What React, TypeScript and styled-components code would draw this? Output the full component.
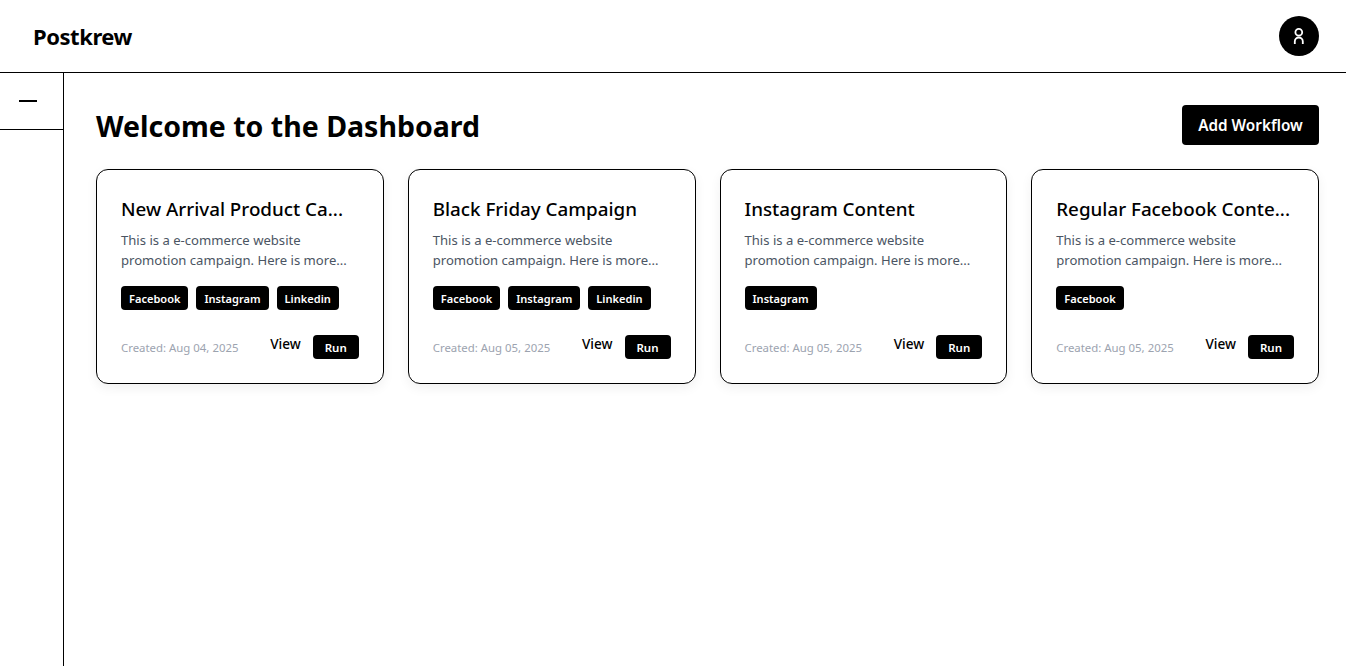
import React from 'react';
import styled, { createGlobalStyle } from 'styled-components';

const GlobalStyle = createGlobalStyle`
  * { box-sizing: border-box; }
  html, body { margin: 0; padding: 0; background: #fff; height: 100%; }
  body { font-family: "Noto Sans", "Open Sans", sans-serif; color: #000; }
`;

const Page = styled.div`
  height: 666px;
  display: flex;
  flex-direction: column;
  overflow: hidden;
`;

const Header = styled.header`
  height: 73px;
  flex: none;
  display: flex;
  align-items: center;
  justify-content: space-between;
  padding: 0 27px 1px 32px;
  border-bottom: 1px solid #000;
`;

const Logo = styled.div`
  font-size: 22px;
  font-weight: 700;
  letter-spacing: -0.45px;
  margin-left: 1px;
`;

const Avatar = styled.button`
  width: 40px;
  height: 40px;
  padding: 0;
  border: none;
  border-radius: 50%;
  background: #000;
  display: flex;
  align-items: center;
  justify-content: center;
`;

const Body = styled.div`
  flex: 1;
  display: flex;
  min-height: 0;
`;

const Sidebar = styled.aside`
  width: 64px;
  flex: none;
  border-right: 1px solid #000;
`;

const SideToggle = styled.div`
  height: 57px;
  display: flex;
  align-items: center;
  padding-left: 19px;
  border-bottom: 1px solid #000;
`;

const Dash = styled.span`
  display: block;
  width: 18px;
  height: 2px;
  background: #000;
`;

const Main = styled.main`
  flex: 1;
  min-width: 0;
  padding: 32px 27px 32px 32px;
`;

const TitleRow = styled.div`
  display: flex;
  align-items: center;
  justify-content: space-between;
  margin-bottom: 24px;
`;

const Title = styled.h1`
  margin: 0;
  padding-top: 2px;
  font-size: 28.5px;
  line-height: 38px;
  font-weight: 700;
`;

const AddButton = styled.button`
  height: 40px;
  width: 137px;
  padding: 0;
  border: none;
  border-radius: 4px;
  background: #000;
  color: #fff;
  font: 600 15.3px "Noto Sans", "Open Sans", sans-serif;
`;

const CardGrid = styled.div`
  display: grid;
  grid-template-columns: repeat(4, minmax(0, 1fr));
  gap: 24px;
`;

const Card = styled.article`
  height: 215px;
  padding: 24px;
  border: 1px solid #000;
  border-radius: 12px;
  background: #fff;
  box-shadow: 0 4px 12px rgba(0, 0, 0, 0.06);
  display: flex;
  flex-direction: column;
`;

const CardTitle = styled.h3`
  margin: 0 0 7px;
  padding-top: 1px;
  font-size: 18.8px;
  line-height: 28px;
  font-weight: 500;
  white-space: nowrap;
`;

const CardText = styled.p`
  margin: 0 0 16px;
  font-size: 13.1px;
  line-height: 20px;
  color: #4b5563;
`;

const Tags = styled.div`
  display: flex;
  gap: 8px;
  height: 24px;
`;

const Tag = styled.span`
  height: 24px;
  padding: 1px 8px 0;
  border-radius: 4px;
  background: #000;
  color: #fff;
  font-size: 11.05px;
  font-weight: 600;
  line-height: 23px;
`;

const CardFooter = styled.div`
  margin-top: auto;
  display: flex;
  align-items: center;
  justify-content: space-between;
`;

const Created = styled.span`
  font-size: 11.4px;
  color: #9ca3af;
`;

const Actions = styled.div`
  display: flex;
  align-items: center;
  gap: 12px;
`;

const ViewLink = styled.span`
  font-size: 13.6px;
  font-weight: 500;
  position: relative;
  top: -4px;
`;

const RunButton = styled.button`
  height: 24px;
  width: 46px;
  padding: 0;
  border: none;
  border-radius: 4px;
  background: #000;
  color: #fff;
  font: 600 11.5px "Noto Sans", "Open Sans", sans-serif;
`;

const workflows = [
  { title: 'New Arrival Product Ca...', date: 'Aug 04, 2025', tags: ['Facebook', 'Instagram', 'Linkedin'] },
  { title: 'Black Friday Campaign', date: 'Aug 05, 2025', tags: ['Facebook', 'Instagram', 'Linkedin'] },
  { title: 'Instagram Content', date: 'Aug 05, 2025', tags: ['Instagram'] },
  { title: 'Regular Facebook Conte...', date: 'Aug 05, 2025', tags: ['Facebook'] },
];

export default function App() {
  return (
    <Page>
      <GlobalStyle />
      <Header>
        <Logo>Postkrew</Logo>
        <Avatar aria-label="Profile">
          <svg width="20" height="20" viewBox="0 0 20 20" fill="none" stroke="#fff" strokeWidth="1.8">
            <circle cx="9.8" cy="6.2" r="3.4" />
            <path d="M5.8 18v-2.5a4 4 0 0 1 8 0V18" />
          </svg>
        </Avatar>
      </Header>
      <Body>
        <Sidebar>
          <SideToggle>
            <Dash />
          </SideToggle>
        </Sidebar>
        <Main>
          <TitleRow>
            <Title>Welcome to the Dashboard</Title>
            <AddButton>Add Workflow</AddButton>
          </TitleRow>
          <CardGrid>
            {workflows.map((w) => (
              <Card key={w.title}>
                <CardTitle>{w.title}</CardTitle>
                <CardText>
                  This is a e-commerce website
                  <br />
                  promotion campaign. Here is more...
                </CardText>
                <Tags>
                  {w.tags.map((t) => (
                    <Tag key={t}>{t}</Tag>
                  ))}
                </Tags>
                <CardFooter>
                  <Created>Created: {w.date}</Created>
                  <Actions>
                    <ViewLink>View</ViewLink>
                    <RunButton>Run</RunButton>
                  </Actions>
                </CardFooter>
              </Card>
            ))}
          </CardGrid>
        </Main>
      </Body>
    </Page>
  );
}
